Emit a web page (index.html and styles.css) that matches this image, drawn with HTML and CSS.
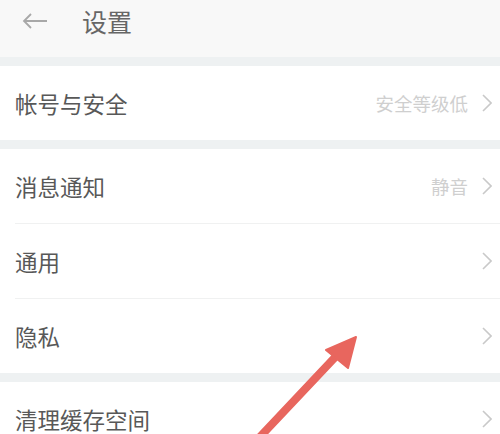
FILE: index.html
```html
<!DOCTYPE html>
<html lang="zh">

<head>
    <meta charset="UTF-8">
    <title>设置</title>
    <link rel="stylesheet" href="styles.css">
</head>

<body>
    <main class="pantalla">
        <header class="cabecera">
            <svg class="volver" width="26" height="16" viewBox="0 0 26 16">
                <path d="M25 8H2M9 1L2 8l7 7" fill="none" stroke="#a8a8a8" stroke-width="1.8" />
            </svg>
            <h1>设置</h1>
        </header>

        <div class="separador"></div>
        <section class="grupo">
            <a class="fila" href="#">
                <span class="nombre">帐号与安全</span>
                <span class="valor">安全等级低</span>
                <svg class="flecha" width="10" height="18" viewBox="0 0 10 18"><path d="M1 1l8 8-8 8" /></svg>
            </a>
        </section>

        <div class="separador"></div>
        <section class="grupo">
            <a class="fila" href="#">
                <span class="nombre">消息通知</span>
                <span class="valor">静音</span>
                <svg class="flecha" width="10" height="18" viewBox="0 0 10 18"><path d="M1 1l8 8-8 8" /></svg>
            </a>
            <a class="fila" href="#">
                <span class="nombre">通用</span>
                <svg class="flecha" width="10" height="18" viewBox="0 0 10 18"><path d="M1 1l8 8-8 8" /></svg>
            </a>
            <a class="fila" href="#">
                <span class="nombre">隐私</span>
                <svg class="flecha" width="10" height="18" viewBox="0 0 10 18"><path d="M1 1l8 8-8 8" /></svg>
            </a>
        </section>

        <div class="separador"></div>
        <section class="grupo">
            <a class="fila" href="#">
                <span class="nombre">清理缓存空间</span>
                <svg class="flecha" width="10" height="18" viewBox="0 0 10 18"><path d="M1 1l8 8-8 8" /></svg>
            </a>
        </section>

        <!-- flecha roja de anotacion -->
        <svg class="marca" width="500" height="434" viewBox="0 0 500 434">
            <path d="M257 440L340 352" stroke="#e8665e" stroke-width="8" stroke-linecap="round" />
            <path d="M356 337L326 350L348 368Z" fill="#e8665e" stroke="#e8665e" stroke-width="2" stroke-linejoin="round" />
        </svg>
    </main>
</body>

</html>
```

FILE: styles.css
```css
body {
    margin: 0;
    font-family: "Noto Sans CJK SC", "Noto Sans", sans-serif;
    background: #ffffff;
}

.pantalla {
    position: relative;
    width: 500px;
    height: 434px;
    overflow: hidden;
}

.cabecera {
    display: flex;
    align-items: center;
    height: 42px;
    padding: 0 0 15px 22px;
    background: #f8f8f8;
}

.volver {
    margin-right: 34px;
}

.cabecera h1 {
    margin: 0;
    font-size: 25px;
    font-weight: normal;
    color: #666;
    line-height: 1;
}

.separador {
    height: 9px;
    background: #eef1f2;
}

.grupo {
    padding-left: 15px;
}

.fila {
    display: flex;
    align-items: center;
    height: 74px;
    padding-right: 8px;
    border-bottom: 1px solid #f0f1f1;
    text-decoration: none;
}

.fila:last-child {
    border-bottom: none;
}

.nombre {
    flex: 1;
    font-size: 22.5px;
    color: #585858;
}

.valor {
    font-size: 18.5px;
    color: #cfcfcf;
    margin-right: 14px;
}

.flecha path {
    fill: none;
    stroke: #c9c9c9;
    stroke-width: 1.6;
}

.marca {
    position: absolute;
    left: 0;
    top: 0;
    pointer-events: none;
}
```
